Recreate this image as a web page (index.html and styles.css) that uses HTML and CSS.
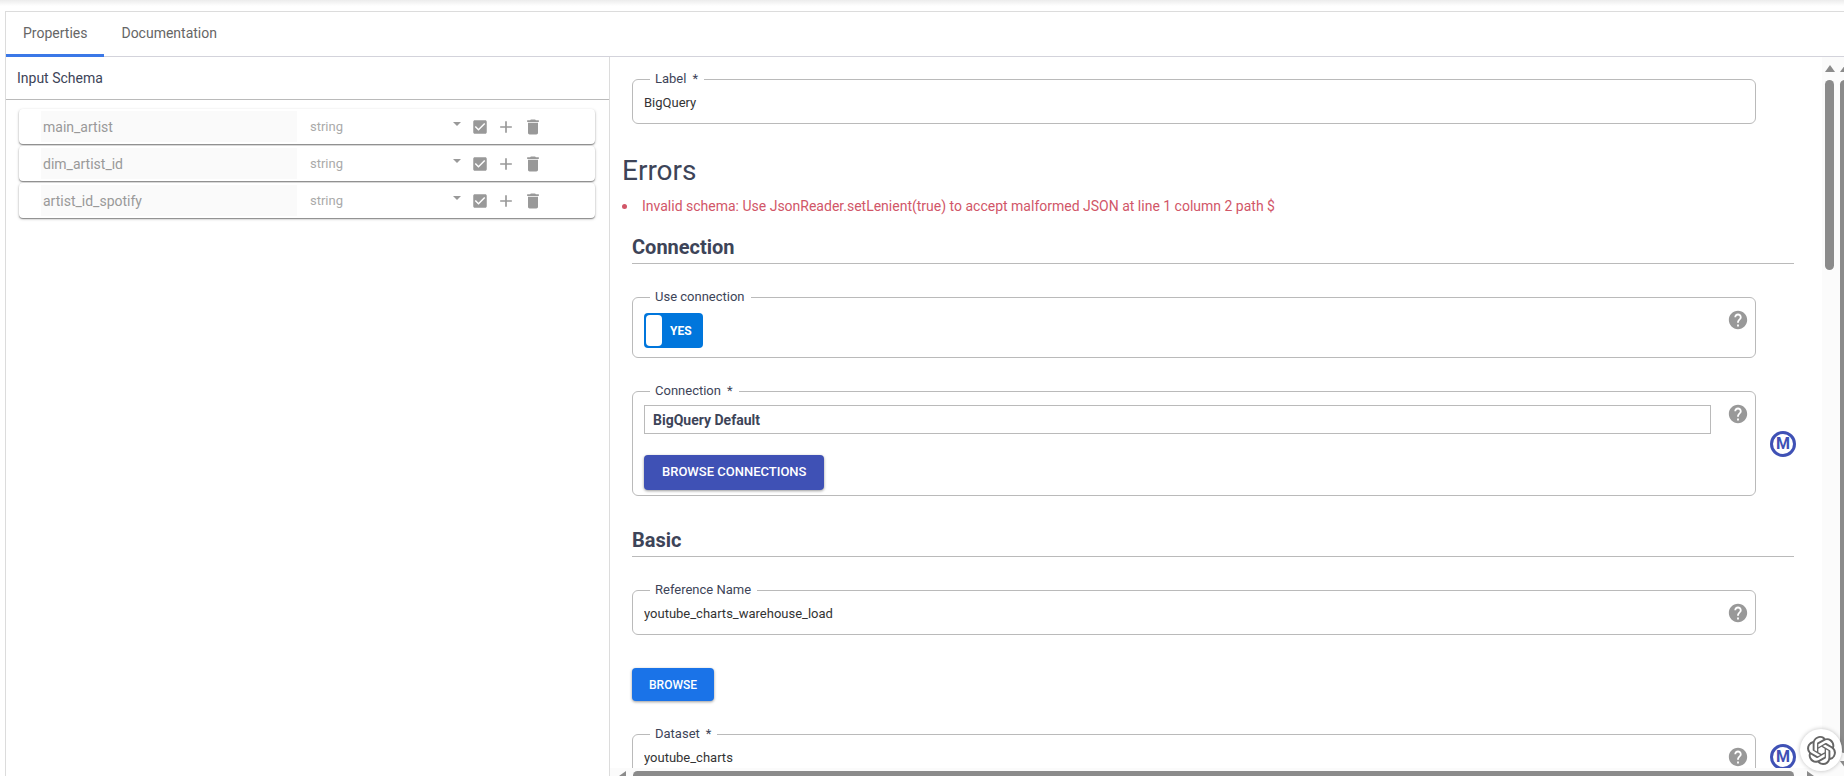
FILE: index.html
```html
<!DOCTYPE html>
<html lang="en">
<head>
<meta charset="utf-8">
<title>BigQuery properties</title>
<link rel="stylesheet" href="styles.css">
</head>
<body>
<svg class="defs" aria-hidden="true">
  <symbol id="i-check" viewBox="0 0 24 24"><path d="M19 3H5c-1.110 0-2 .9-2 2v14c0 1.100.890 2 2 2h14c1.110 0 2-.9 2-2V5c0-1.100-.890-2-2-2zm-9 14l-5-5 1.410-1.410L10 14.170l7.590-7.590L19 8l-9 9z"/></symbol>
  <symbol id="i-plus" viewBox="0 0 24 24"><path d="M19 13h-6v6h-2v-6H5v-2h6V5h2v6h6v2z"/></symbol>
  <symbol id="i-trash" viewBox="0 0 24 24"><path d="M6 19c0 1.100.9 2 2 2h8c1.100 0 2-.9 2-2V7H6v12zM19 4h-3.500l-1-1h-5l-1 1H5v2h14V4z"/></symbol>
  <symbol id="i-help" viewBox="0 0 24 24"><path d="M12 2C6.480 2 2 6.480 2 12s4.480 10 10 10 10-4.480 10-10S17.520 2 12 2zm1 17h-2v-2h2v2zm2.070-7.750l-.9.920C13.450 12.900 13 13.500 13 15h-2v-.5c0-1.100.450-2.100 1.170-2.830l1.240-1.260c.370-.360.590-.860.590-1.410 0-1.100-.9-2-2-2s-2 .9-2 2H8c0-2.210 1.790-4 4-4s4 1.790 4 4c0 .880-.360 1.680-.930 2.250z"/></symbol>
</svg>
<div class="app">
  <div class="panel">
    <nav class="tabs" role="tablist">
      <button class="tab tab-active" role="tab" aria-selected="true">Properties</button>
      <button class="tab" role="tab" aria-selected="false">Documentation</button>
    </nav>
    <div class="body">
      <aside class="schema">
        <h2 class="schema-title">Input Schema</h2>
        <div class="rows">
          <div class="row">
            <input class="name" aria-label="Field name" value="main_artist" disabled>
            <select class="type" aria-label="Field type" disabled><option>string</option></select>
            <span class="caret"></span>
            <button class="icon icon-check" aria-label="Nullable"><svg><use href="#i-check"/></svg></button>
            <button class="icon" aria-label="Add"><svg><use href="#i-plus"/></svg></button>
            <button class="icon" aria-label="Delete"><svg><use href="#i-trash"/></svg></button>
          </div>
          <div class="row">
            <input class="name" aria-label="Field name" value="dim_artist_id" disabled>
            <select class="type" aria-label="Field type" disabled><option>string</option></select>
            <span class="caret"></span>
            <button class="icon icon-check" aria-label="Nullable"><svg><use href="#i-check"/></svg></button>
            <button class="icon" aria-label="Add"><svg><use href="#i-plus"/></svg></button>
            <button class="icon" aria-label="Delete"><svg><use href="#i-trash"/></svg></button>
          </div>
          <div class="row">
            <input class="name" aria-label="Field name" value="artist_id_spotify" disabled>
            <select class="type" aria-label="Field type" disabled><option>string</option></select>
            <span class="caret"></span>
            <button class="icon icon-check" aria-label="Nullable"><svg><use href="#i-check"/></svg></button>
            <button class="icon" aria-label="Add"><svg><use href="#i-plus"/></svg></button>
            <button class="icon" aria-label="Delete"><svg><use href="#i-trash"/></svg></button>
          </div>
        </div>
      </aside>
      <main class="config">
        <div class="form">
          <div class="field">
            <fieldset class="box">
              <legend><label for="label">Label</label><span class="req">*</span></legend>
              <input id="label" class="text" value="BigQuery">
            </fieldset>
          </div>
          <h1 class="errors-title">Errors</h1>
          <ul class="errors"><li>Invalid schema: Use JsonReader.setLenient(true) to accept malformed JSON at line 1 column 2 path $</li></ul>
          <h2 class="section">Connection</h2>
          <div class="field">
            <fieldset class="box box-toggle">
              <legend>Use connection</legend>
              <button class="toggle" role="switch" aria-checked="true"><span class="knob"></span>YES</button>
              <svg class="help"><use href="#i-help"/></svg>
            </fieldset>
          </div>
          <div class="field">
            <fieldset class="box box-conn">
              <legend><label for="conn">Connection</label><span class="req">*</span></legend>
              <div class="conn">
                <input id="conn" class="conn-input" value="BigQuery Default">
                <button class="btn btn-indigo">BROWSE CONNECTIONS</button>
              </div>
              <svg class="help"><use href="#i-help"/></svg>
            </fieldset>
            <button class="macro" aria-label="Macro">M</button>
          </div>
          <h2 class="section section-next">Basic</h2>
          <div class="field">
            <fieldset class="box">
              <legend><label for="ref">Reference Name</label></legend>
              <input id="ref" class="text" value="youtube_charts_warehouse_load">
              <svg class="help"><use href="#i-help"/></svg>
            </fieldset>
          </div>
          <button class="btn btn-blue">BROWSE</button>
          <div class="field">
            <fieldset class="box">
              <legend><label for="dataset">Dataset</label><span class="req">*</span></legend>
              <input id="dataset" class="text" value="youtube_charts">
              <svg class="help"><use href="#i-help"/></svg>
            </fieldset>
            <button class="macro" aria-label="Macro">M</button>
          </div>
        </div>
        <div class="vbars">
          <div class="vbar"><span class="up"></span><span class="vthumb vthumb-short"></span></div>
          <div class="vbar"><span class="up"></span><span class="vthumb"></span><span class="down"></span></div>
        </div>
        <div class="hbar"><span class="left"></span><span class="hthumb"></span><span class="right"></span></div>
      </main>
    </div>
  </div>
</div>
<button class="assistant" aria-label="Assistant">
  <svg viewBox="0 0 24 24"><path d="M22.2819 9.8211a5.9847 5.9847 0 0 0-.5157-4.9108 6.0462 6.0462 0 0 0-6.5098-2.9A6.0651 6.0651 0 0 0 4.9807 4.1818a5.9847 5.9847 0 0 0-3.9977 2.9 6.0462 6.0462 0 0 0 .7427 7.0966 5.98 5.98 0 0 0 .511 4.9107 6.051 6.051 0 0 0 6.5146 2.9001A5.9847 5.9847 0 0 0 13.2599 24a6.0557 6.0557 0 0 0 5.7718-4.2058 5.9894 5.9894 0 0 0 3.9977-2.9001 6.0557 6.0557 0 0 0-.7475-7.0729zm-9.022 12.6081a4.4755 4.4755 0 0 1-2.8764-1.0408l.1419-.0804 4.7783-2.7582a.7948.7948 0 0 0 .3927-.6813v-6.7369l2.02 1.1686a.071.071 0 0 1 .038.052v5.5826a4.504 4.504 0 0 1-4.4945 4.4944zm-9.6607-4.1254a4.4708 4.4708 0 0 1-.5346-3.0137l.142.0852 4.783 2.7582a.7712.7712 0 0 0 .7806 0l5.8428-3.3685v2.3324a.0804.0804 0 0 1-.0332.0615L9.74 19.9502a4.4992 4.4992 0 0 1-6.1408-1.6464zM2.3408 7.8956a4.485 4.485 0 0 1 2.3655-1.9728V11.6a.7664.7664 0 0 0 .3879.6765l5.8144 3.3543-2.0201 1.1685a.0757.0757 0 0 1-.071 0l-4.8303-2.7865A4.504 4.504 0 0 1 2.3408 7.872zm16.5963 3.8558L13.1038 8.364 15.1192 7.2a.0757.0757 0 0 1 .071 0l4.8303 2.7913a4.4944 4.4944 0 0 1-.6765 8.1042v-5.6772a.79.79 0 0 0-.407-.667zm2.0107-3.0231l-.142-.0852-4.7735-2.7818a.7759.7759 0 0 0-.7854 0L9.409 9.2297V6.8974a.0662.0662 0 0 1 .0284-.0615l4.8303-2.7866a4.4992 4.4992 0 0 1 6.6802 4.66zM8.3065 12.863l-2.02-1.1638a.0804.0804 0 0 1-.038-.0567V6.0742a4.4992 4.4992 0 0 1 7.3757-3.4537l-.142.0805L8.704 5.459a.7948.7948 0 0 0-.3927.6813zm1.0976-2.3654l2.602-1.4998 2.6069 1.4998v2.9994l-2.5974 1.4997-2.6067-1.4997Z"/></svg>
</button>
</body>
</html>
```
FILE: styles.css
```css
* { box-sizing: border-box; }
body {
  margin: 0;
  height: 100vh;
  overflow: hidden;
  background: #fff;
  color: #3d4458;
  font-family: Roboto, sans-serif;
  font-size: 14px;
}
button, input, select { font: inherit; margin: 0; padding: 0; border: 0; background: none; color: inherit; }
.defs { display: none; }
.app {
  height: 100%;
  padding: 11px 0 0 5px;
  background: linear-gradient(#ececec, #fff 6px);
}
.panel { height: 100%; display: flex; flex-direction: column; background: #fff; border: solid #dcdcdc; border-width: 1px 0 0 1px; }

.tabs { flex: none; display: flex; height: 45px; border-bottom: 1px solid #d3d3db; }
.tab { height: 45px; padding: 0 17px; color: #666; border-bottom: 3px solid transparent; }
.tab-active { border-bottom-color: #3b78e7; }

.body { flex: 1; min-height: 0; display: grid; grid-template-columns: 604fr 1234fr; }
.schema { border-right: 1px solid #dcdcdc; }
.schema-title { margin: 0; padding: 0 11px; font-size: 14px; font-weight: 400; line-height: 42px; border-bottom: 1px solid #bababa; }
.rows { display: flex; flex-direction: column; gap: 2px; padding: 9px 14px 0 13px; }
.row {
  display: flex;
  align-items: center;
  height: 35px;
  padding-left: 22px;
  border-radius: 4px;
  background: #fff;
  box-shadow: 0 1px 1px rgba(0,0,0,.35), 0 1px 3px rgba(0,0,0,.25);
}
.name { width: 256px; height: 31px; padding-left: 2px; background: #fafafa; color: #999; }
.type { width: 143px; margin-left: 13px; font-size: 13px; color: #aaa; opacity: 1; appearance: none; }
.caret { margin: 0 10px 6px 0; border: solid transparent; border-width: 4px 4px 0; border-top-color: #999; }
.icon { display: flex; width: 20px; height: 20px; margin-right: 7px; color: #999; }
.icon svg { width: 100%; height: 100%; fill: currentColor; }
.icon-check { width: 18px; height: 18px; }

.config { min-width: 0; min-height: 0; display: grid; grid-template-columns: 1fr 22px; grid-template-rows: 1fr 8px; }
.form { min-height: 0; overflow: hidden; padding: 14px 28px 0 12px; }
.field { display: flex; align-items: center; gap: 14px; margin: 0 0 25px 10px; padding-right: 38px; }
.field:has(.macro) { margin-right: -2px; padding-right: 0; }
.box {
  flex: 1;
  min-width: 0;
  display: flex;
  align-items: center;
  justify-content: space-between;
  margin: 0;
  padding: 0 6px 7px 11px;
  border: 1px solid #bababa;
  border-radius: 6px;
}
legend { margin-left: 6px; padding: 0 6px 2px 5px; font-size: 13px; line-height: 15px; }
.req { margin-left: 6px; }
.text { flex: 1; height: 28px; font-size: 13px; color: #333; }
.help { flex: none; width: 22px; height: 22px; fill: #999; }
.box-toggle { align-items: flex-start; padding-top: 3px; padding-bottom: 9px; }
.toggle {
  display: flex;
  align-items: center;
  gap: 8px;
  width: 59px;
  height: 35px;
  margin-top: 4px;
  padding: 2px;
  border-radius: 4px;
  background: #0076dc;
  color: #fff;
  font-size: 12px;
  font-weight: 700;
}
.knob { width: 16px; height: 31px; border-radius: 4px; background: #fff; }
.box-conn { align-items: flex-start; padding-top: 3px; padding-bottom: 5px; }
.conn { flex: 1; display: flex; flex-direction: column; align-items: flex-start; gap: 21px; margin-right: 16px; padding-top: 2px; }
.conn-input { width: 100%; height: 29px; padding: 0 8px; border: 1px solid #bababa; font-weight: 700; }
.btn { padding: 0 18px; border-radius: 4px; color: #fff; font-size: 13px; font-weight: 500; box-shadow: 0 1px 3px rgba(0,0,0,.4); }
.btn-indigo { height: 35px; padding-bottom: 2px; background: #3f51b5; }
.btn-blue { display: block; height: 33px; margin: 33px 0 25px 10px; padding: 0 17px; background: #1a73e8; font-size: 12px; }
.macro { flex: none; width: 26px; height: 26px; margin-top: 8px; border: 3px solid #3f51b5; border-radius: 50%; color: #3f51b5; font-size: 16px; font-weight: 700; line-height: 20px; }
.errors-title { margin: 31px 0 9px; font-size: 28px; font-weight: 400; line-height: 32px; }
.errors { margin: 0 0 19px; padding: 0; list-style: none; line-height: 20px; color: #d15668; }
.errors li { display: flex; align-items: center; gap: 15px; }
.errors li::before { content: ""; width: 5px; height: 5px; border-radius: 50%; background: currentColor; }
.section { margin: 0 0 25px 10px; padding-bottom: 4px; border-bottom: 1px solid #bababa; font-size: 20px; font-weight: 700; line-height: 24px; }
.section-next { margin-top: 32px; }

.vbars { display: flex; gap: 6px; padding: 8px 0 0 3px; overflow: hidden; background: #fbfbfb; }
.vbar { flex: none; width: 9px; display: flex; flex-direction: column; align-items: center; gap: 8px; }
.up { border: solid transparent; border-width: 0 5px 7px; border-bottom-color: #8b8b8b; }
.down { border: solid transparent; border-width: 7px 5px 0; border-top-color: #8b8b8b; }
.vthumb { flex: 1; width: 9px; border-radius: 5px; background: #8b8b8b; }
.vthumb-short { flex: none; height: 190px; }
.hbar { grid-column: 1 / -1; display: flex; gap: 7px; padding: 3px 30px 0 9px; overflow: hidden; background: #fbfbfb; }
.hthumb { flex: 1; height: 9px; margin-right: 6px; border-radius: 5px; background: #8b8b8b; }
.left { border: solid transparent; border-width: 5px 7px 5px 0; border-right-color: #8b8b8b; }
.right { border: solid transparent; border-width: 5px 0 5px 7px; border-left-color: #8b8b8b; }

.assistant {
  position: fixed;
  right: 2px;
  bottom: 5px;
  display: grid;
  place-items: center;
  width: 42px;
  height: 42px;
  border-radius: 50%;
  background: #fff;
  box-shadow: 0 0 4px rgba(0,0,0,.25);
}
.assistant svg { width: 29px; height: 29px; fill: #666; }
```
